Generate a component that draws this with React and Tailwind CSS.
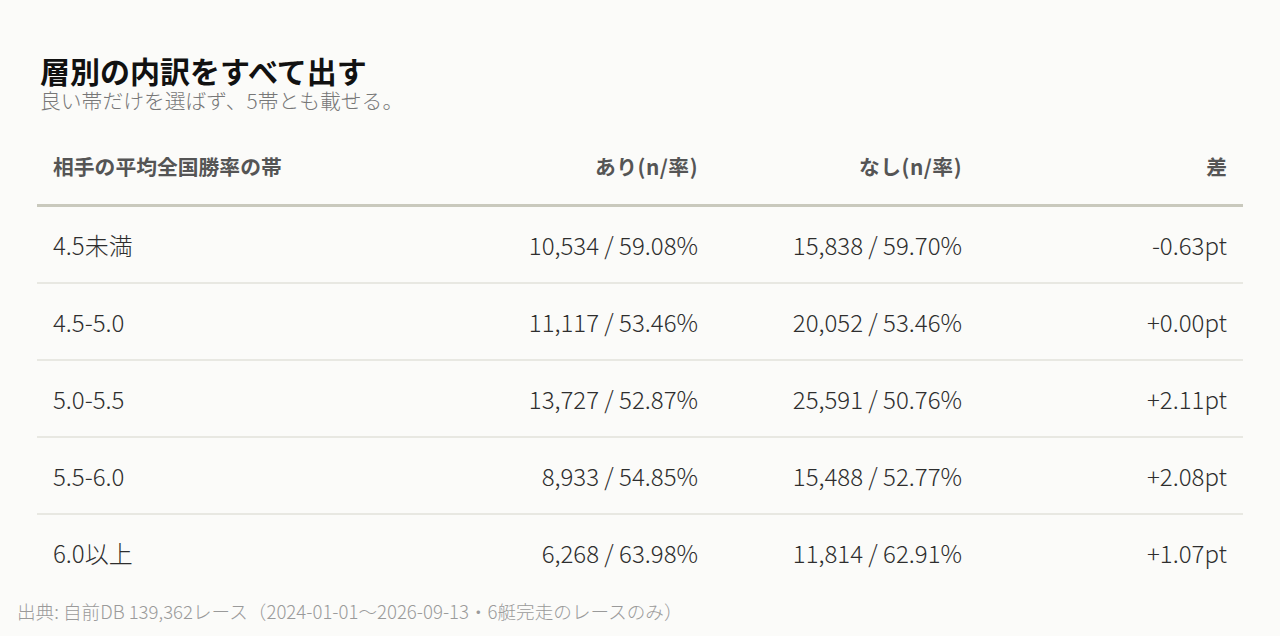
const rows = [
  { band: '4.5未満', yes: '10,534 / 59.08%', no: '15,838 / 59.70%', diff: '-0.63pt' },
  { band: '4.5-5.0', yes: '11,117 / 53.46%', no: '20,052 / 53.46%', diff: '+0.00pt' },
  { band: '5.0-5.5', yes: '13,727 / 52.87%', no: '25,591 / 50.76%', diff: '+2.11pt' },
  { band: '5.5-6.0', yes: '8,933 / 54.85%', no: '15,488 / 52.77%', diff: '+2.08pt' },
  { band: '6.0以上', yes: '6,268 / 63.98%', no: '11,814 / 62.91%', diff: '+1.07pt' },
];

const font = "font-['Noto_Sans_CJK_JP','Noto_Sans',sans-serif]";

export default function App() {
  return (
    <div className={`${font} w-[1280px] h-[636px] bg-[#fbfbf9] overflow-hidden flex flex-col`}>
      <div className="px-[37px] pt-[54px]">
        <h1 className="pl-[3px] text-[30px] leading-[32px] font-bold text-[#111]">層別の内訳をすべて出す</h1>
        <p className="pl-[3px] mt-[2px] text-[20.8px] leading-[24px] font-light text-[#777]">良い帯だけを選ばず、5帯とも載せる。</p>

        <div className="mt-[17px] w-[1206px]">
          <div className="grid grid-cols-[1fr_264px_264px_265px] border-b-[3px] border-[#c9c9bd] text-[20.8px] leading-[35px] font-bold text-[#555]">
            <div className="px-4 py-[20px]">相手の平均全国勝率の帯</div>
            <div className="px-4 py-[20px] text-right tracking-[0.5px]">あり(n/率)</div>
            <div className="px-4 py-[20px] text-right tracking-[0.5px]">なし(n/率)</div>
            <div className="px-4 py-[20px] text-right">差</div>
          </div>
          {rows.map((r, i) => (
            <div
              key={r.band}
              className={`grid grid-cols-[1fr_264px_264px_265px] text-[24px] leading-[35px] font-light text-[#2e2e2e] ${i < rows.length - 1 ? 'border-b-2 border-[#e8e8e2]' : ''}`}
            >
              <div className="px-4 py-[20px]">{r.band}</div>
              <div className="px-4 py-[20px] text-right">{r.yes}</div>
              <div className="px-4 py-[20px] text-right">{r.no}</div>
              <div className="px-4 py-[20px] text-right">{r.diff}</div>
            </div>
          ))}
        </div>
      </div>
      <p className="pl-[17px] mt-[9px] text-[18.6px] leading-[24px] font-light text-[#9a9a9a]">
        出典: 自前DB 139,362レース（2024-01-01〜2026-09-13・6艇完走のレースのみ）
      </p>
    </div>
  );
}
